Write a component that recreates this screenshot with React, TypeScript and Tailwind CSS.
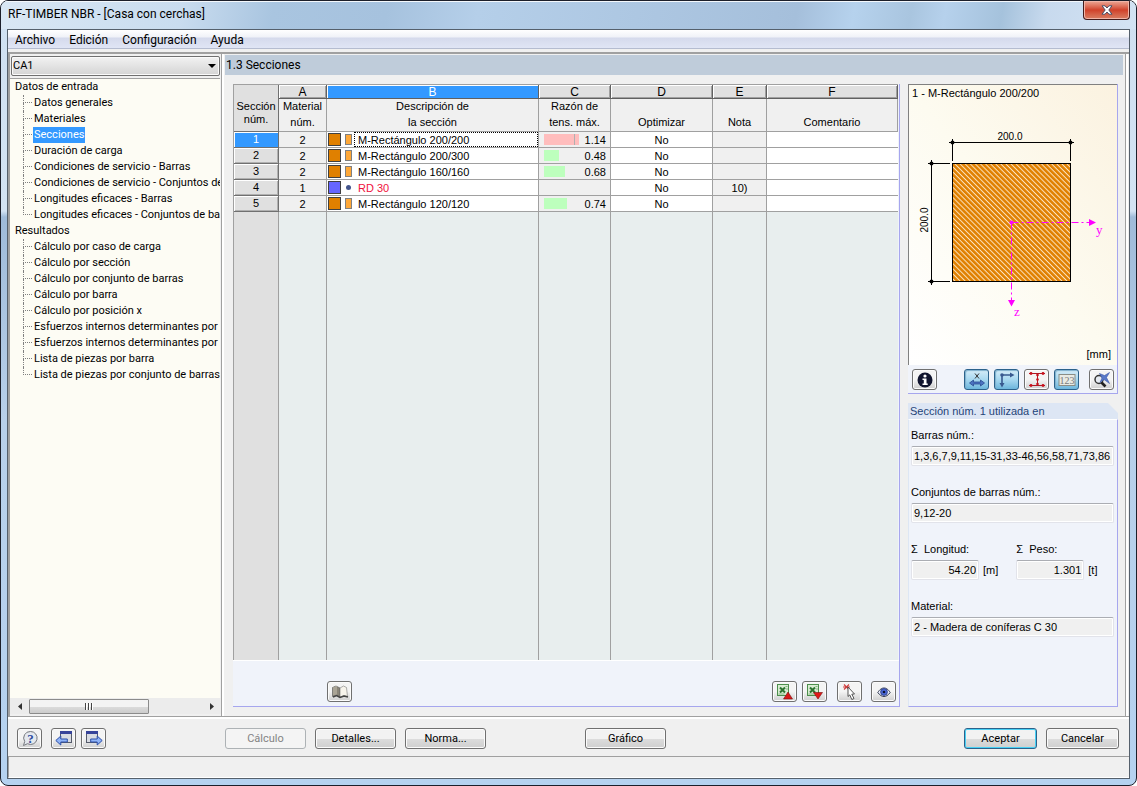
import React from "react";

const inputItems = [
  "Datos generales",
  "Materiales",
  "Secciones",
  "Duración de carga",
  "Condiciones de servicio - Barras",
  "Condiciones de servicio - Conjuntos de barras",
  "Longitudes eficaces - Barras",
  "Longitudes eficaces - Conjuntos de barras",
];

const resultItems = [
  "Cálculo por caso de carga",
  "Cálculo por sección",
  "Cálculo por conjunto de barras",
  "Cálculo por barra",
  "Cálculo por posición x",
  "Esfuerzos internos determinantes por barra",
  "Esfuerzos internos determinantes por conjunto de barras",
  "Lista de piezas por barra",
  "Lista de piezas por conjunto de barras",
];

type Row = {
  id: number;
  material: number;
  name: string;
  round?: boolean;
  ratio?: number;
  note?: string;
};

const rows: Row[] = [
  { id: 1, material: 2, name: "M-Rectángulo 200/200", ratio: 1.14 },
  { id: 2, material: 2, name: "M-Rectángulo 200/300", ratio: 0.48 },
  { id: 3, material: 2, name: "M-Rectángulo 160/160", ratio: 0.68 },
  { id: 4, material: 1, name: "RD 30", round: true, note: "10)" },
  { id: 5, material: 2, name: "M-Rectángulo 120/120", ratio: 0.74 },
];

// width in pixels of a bar whose ratio is 1
const BAR_UNIT = 31;

const TreeGroup = ({ title, items, selected }: { title: string; items: string[]; selected?: string }) => (
  <li>
    <div className="h-4 pl-[5px] leading-4">{title}</div>
    <ul className="pl-[13px]">
      {items.map((item, i) => (
        <li key={item} className="flex h-4">
          <span className="flex w-[10px] shrink-0 flex-col pr-px">
            <span className="h-2 border-b border-l border-dotted border-[#808080]"></span>
            {i < items.length - 1 && <span className="h-2 border-l border-dotted border-[#808080]"></span>}
          </span>
          <a
            href="#"
            className={
              item === selected
                ? "bg-[#3399ff] px-px leading-4 whitespace-nowrap text-white"
                : "px-px leading-4 whitespace-nowrap"
            }
          >
            {item}
          </a>
        </li>
      ))}
    </ul>
  </li>
);

const IconButton = ({ label, active, children }: { label: string; active?: boolean; children: React.ReactNode }) => (
  <button
    aria-label={label}
    className={
      active
        ? "flex h-[21px] w-[25px] shrink-0 items-center justify-center rounded-[3px] border border-[#2c628b] bg-linear-to-b from-[#d5ecf8] via-[#a8d8f0] to-[#6cb6dc] shadow-[inset_1px_1px_1px_#7fb0cc]"
        : "flex h-[21px] w-[25px] shrink-0 items-center justify-center rounded-[3px] border border-[#707070] bg-linear-to-b from-[#f4f4f4] from-50% to-[#cfcfcf] shadow-[inset_0_0_0_1px_#fbfbfb]"
    }
  >
    {children}
  </button>
);

const ColHead = ({ letter, active }: { letter: string; active?: boolean }) => (
  <th
    scope="col"
    className={
      active
        ? "h-[14px] border-r border-b border-[#606060] bg-[#3399ff] p-0 font-normal text-white shadow-[inset_1px_1px_0_#ffffff]"
        : "h-[14px] border-r border-b border-[#606060] bg-[#e0e0e0] p-0 font-normal shadow-[inset_1px_1px_0_#ffffff,inset_-1px_-1px_0_#a0a0a0]"
    }
  >
    <div className="h-[13px] text-[12px] leading-[14px]">{letter}</div>
  </th>
);

const Title = ({ top, bottom }: { top?: string; bottom: string }) => (
  <td className="h-[33px] border-r border-b border-[#a0a0a0] bg-[#f0f0f0] p-0 text-center align-bottom">
    <div className="h-4 leading-[14px]">{top}</div>
    <div className="h-4 leading-[14px]">{bottom}</div>
  </td>
);

const Field = ({ id, value, right }: { id: string; value: string; right?: boolean }) => (
  <input
    id={id}
    readOnly
    defaultValue={value}
    className={
      right
        ? "h-5 w-[68px] rounded-[2px] border border-[#e2e3ea] border-t-[#abadb3] bg-[#f0f0f0] px-[2px] text-right shadow-[inset_0_0_0_1px_#ffffff]"
        : "h-5 w-full rounded-[2px] border border-[#e2e3ea] border-t-[#abadb3] bg-[#f0f0f0] px-[2px] shadow-[inset_0_0_0_1px_#ffffff]"
    }
  />
);

const SectionDrawing = () => (
  <svg viewBox="0 0 209 240" className="h-[240px] w-[209px]" fill="none">
    <defs>
      <pattern id="hatch" width="3.6" height="3.6" patternUnits="userSpaceOnUse" patternTransform="rotate(45)">
        <rect width="4" height="4" fill="#e08000" />
        <rect width="4" height="1" fill="#fbe3c0" />
      </pattern>
    </defs>
    <rect x="43.5" y="61.5" width="118" height="118" fill="url(#hatch)" stroke="#000" />
    <g stroke="#000" shapeRendering="crispEdges">
      <path d="M40 40.500H165M43.500 37V59M161.500 37V59" />
      <path d="M22.500 58V183M19 61.500H41M19 179.500H41" />
    </g>
    <g fill="#000">
      <circle cx="43.500" cy="40.500" r="2" />
      <circle cx="161.500" cy="40.500" r="2" />
      <circle cx="22.500" cy="61.500" r="2" />
      <circle cx="22.500" cy="179.500" r="2" />
    </g>
    <g stroke="#ff00ff">
      <path d="M102.500 120.500H181" strokeDasharray="7 3 2 3" />
      <path d="M102.500 120.500V198" strokeDasharray="7 3 2 3" />
    </g>
    <path d="M180 117l7 3.500-7 3.500zM99 198h7l-3.500 6.500z" fill="#ff00ff" />
    <circle cx="102.500" cy="120.500" r="2" fill="#ff00ff" />
    <text x="101" y="38" textAnchor="middle" fontSize="10" fill="#000">200.0</text>
    <text x="19" y="118" textAnchor="middle" fontSize="10" fill="#000" transform="rotate(-90 19 118)">200.0</text>
    <g fontFamily="Liberation Serif, serif" fontSize="13" fill="#ff00ff">
      <text x="187" y="132">y</text>
      <text x="105" y="214">z</text>
    </g>
  </svg>
);

const ExcelIcon = ({ up }: { up?: boolean }) => (
  <svg viewBox="0 0 17 17" className="size-[17px]">
    <rect x="1.500" y="1.500" width="11" height="11" fill="#d8ecd2" stroke="#4c8f4c" />
    <path d="M4 4.500l5 5M9 4.500l-5 5" stroke="#2c7430" strokeWidth="2" />
    <path d="M9.500 3.500h2M10 6h2M2.500 11h6" stroke="#86b986" />
    {up ? (
      <path d="M12 9l4.500 7h-9z" fill="#d81818" stroke="#7b0d0d" strokeWidth=".6" />
    ) : (
      <path d="M7.500 9.500h9L12 16z" fill="#e01818" stroke="#7b0d0d" strokeWidth=".6" />
    )}
  </svg>
);

const WindowIcon = ({ back }: { back?: boolean }) => (
  <svg viewBox="0 0 18 17" className="h-[17px] w-[18px]">
    <rect x={back ? 5.5 : 1.5} y="1.500" width="11" height="11" fill="#d9dce3" stroke="#555b6b" />
    <rect x={back ? 5 : 1} y="1" width="12" height="3" fill="#37449a" />
    <path
      d={back ? "M.8 10.500l5-4.500v3h6.500v3H5.800v3z" : "M17.200 10.500l-5-4.500v3H5.700v3h6.500v3z"}
      fill="#8fb4f8"
      stroke="#2c4ea8"
    />
  </svg>
);

const textButton =
  "h-[21px] w-[81px] rounded-[3px] border border-[#707070] bg-linear-to-b from-[#f2f2f2] from-50% via-[#dddddd] via-50% to-[#cfcfcf] text-center leading-[19px] shadow-[inset_0_0_0_1px_#fbfbfb]";

const App = () => {
  return (
    <div className="flex h-screen flex-col overflow-hidden rounded-lg border border-[#1c1f2a] bg-[linear-gradient(to_bottom,#cfe0f1_0px,#d3e3f3_210px,#9fbbd9_216px,#b8d0ea_420px,#b5d2f0_100%)] font-[Roboto,sans-serif] text-[11px] text-black">
      <header className="flex h-7 shrink-0 items-start justify-between bg-[linear-gradient(100deg,#d9e7f4_0%,#c9dcef_16%,#a9c5e0_24%,#a6c2de_34%,#b5cfe9_42%,#a5bfdb_70%,#b6d2ed_75%,#a9c5df_80%,#b6d1ec_83%,#a5c2dc_88%,#c8daee_92%,#d3e3f3_100%)] shadow-[inset_0_1px_0_#f4f8fc]">
        <h1 className="pl-[7px] text-[12px] leading-[26px]">RF-TIMBER NBR - [Casa con cerchas]</h1>
        <button
          aria-label="Cerrar"
          className="mr-[6px] flex h-[19px] w-[47px] items-center justify-center rounded-b-[4px] border border-t-0 border-[#431c1c] bg-linear-to-b from-[#eba796] via-[#d0412a] via-50% to-[#d97d62] shadow-[inset_0_0_0_1px_#f0b5a8]"
        >
          <svg viewBox="0 0 12 10" className="h-[10px] w-3">
            <path d="M1 .8h3l2 2.200 2-2.200h3L7.800 5l3.200 4.200H8L6 7 4 9.200H1L4.200 5z" fill="#fff" stroke="#4b5066" strokeWidth="1" />
          </svg>
        </button>
      </header>

      <div className="mx-[6px] mb-[6px] flex min-h-0 flex-1 flex-col border border-[#55606c] bg-[#f0f0f0]">
        <nav className="flex h-[19px] shrink-0 gap-[14px] border-b border-[#b5bcd0] bg-[linear-gradient(to_bottom,#ffffff_0px,#f0f2f8_7px,#d5daec_8px,#e0e5f5_18px)] pl-[7px] text-[12px] leading-5">
          <a href="#">Archivo</a>
          <a href="#">Edición</a>
          <a href="#">Configuración</a>
          <a href="#">Ayuda</a>
        </nav>

        <div className="mt-[3px] flex min-h-0 flex-1 border-t-2 border-b border-[#a0a0a0]">
          <aside className="flex w-[214px] shrink-0 flex-col border-r border-l-2 border-[#a0a0a0] pt-[2px]">
            <div className="relative mx-px mb-[2px]">
              <select
                aria-label="Caso"
                className="h-5 w-full appearance-none rounded-[2px] border border-[#707070] bg-linear-to-b from-[#f2f2f2] to-[#d4d4d4] pl-px shadow-[inset_0_0_0_1px_#fafafa]"
              >
                <option>CA1</option>
              </select>
              <svg viewBox="0 0 8 4" className="pointer-events-none absolute top-2 right-1 h-1 w-2">
                <path d="M0 0h8L4 4z" fill="#000" />
              </svg>
            </div>
            <div className="mr-px min-h-0 flex-1 overflow-hidden border-t border-[#a0a0a0] bg-[#fdfcf4]">
              <ul>
                <TreeGroup title="Datos de entrada" items={inputItems} selected="Secciones" />
                <TreeGroup title="Resultados" items={resultItems} />
              </ul>
            </div>
            <div className="mb-[2px] flex h-4 shrink-0 items-center bg-[#ececec]">
              <button aria-label="Desplazar a la izquierda" className="flex w-[19px] justify-center">
                <svg viewBox="0 0 4 7" className="h-[7px] w-1">
                  <path d="M4 0v7L0 3.500z" fill="#333" />
                </svg>
              </button>
              <div className="flex h-[15px] w-[120px] items-center justify-center gap-px rounded-[1px] border border-[#8b8b8b] bg-linear-to-b from-[#f3f3f3] from-50% via-[#dcdcdc] via-50% to-[#cccccc]">
                <span className="h-[7px] w-[2px] border-l border-[#444444] bg-white"></span>
                <span className="h-[7px] w-[2px] border-l border-[#444444] bg-white"></span>
                <span className="h-[7px] w-[2px] border-l border-[#444444] bg-white"></span>
              </div>
              <button aria-label="Desplazar a la derecha" className="ml-auto flex w-[18px] justify-center">
                <svg viewBox="0 0 4 7" className="h-[7px] w-1">
                  <path d="M0 0v7l4-3.500z" fill="#333" />
                </svg>
              </button>
            </div>
          </aside>

          <main className="mr-[3px] ml-[2px] flex min-w-0 flex-1 flex-col border-r border-[#a0a0a0] pt-px shadow-[-2px_0_0_#ffffff,2px_0_0_#ffffff]">
            <h2 className="mr-[2px] ml-px h-5 shrink-0 bg-[#bfccda] pl-px text-[12px] leading-5">1.3 Secciones</h2>
            <div className="flex min-h-0 flex-1 gap-2 pt-[9px] pr-[7px] pb-[9px] pl-[9px] font-['Liberation_Sans',Arial,sans-serif]">
              <section className="flex min-w-0 flex-1 flex-col border-r border-b border-[#a6a6ee] bg-[#f0f3fa]">
                <div className="grid min-h-0 flex-1 pr-px">
                  <table className="h-full w-full table-fixed border-separate border-spacing-0 border-t border-l border-[#a0a0a0]">
                    <colgroup>
                      <col className="w-[45px]" />
                      <col className="w-12" />
                      <col className="w-[212px]" />
                      <col className="w-[72px]" />
                      <col className="w-[102px]" />
                      <col className="w-[54px]" />
                      <col />
                    </colgroup>
                    <thead>
                      <tr>
                        <th
                          scope="col"
                          rowSpan={2}
                          className="border-r border-b border-[#707070] bg-[#e0e0e0] p-0 pb-[5px] text-center align-bottom leading-[13px] font-normal"
                        >
                          Sección
                          <br />
                          núm.
                        </th>
                        <ColHead letter="A" />
                        <ColHead letter="B" active />
                        <ColHead letter="C" />
                        <ColHead letter="D" />
                        <ColHead letter="E" />
                        <ColHead letter="F" />
                      </tr>
                      <tr>
                        <Title top="Material" bottom="núm." />
                        <Title top="Descripción de" bottom="la sección" />
                        <Title top="Razón de" bottom="tens. máx." />
                        <Title bottom="Optimizar" />
                        <Title bottom="Nota" />
                        <Title bottom="Comentario" />
                      </tr>
                    </thead>
                    <tbody>
                      {rows.map((row) => (
                        <tr key={row.id} className="text-center">
                          <th
                            scope="row"
                            className={
                              row.id === 1
                                ? "h-4 border-r border-b border-[#707070] bg-[#3399ff] p-0 font-normal text-white shadow-[inset_1px_1px_0_#ffffff]"
                                : "h-4 border-r border-b border-[#707070] bg-[#e0e0e0] p-0 font-normal shadow-[inset_1px_1px_0_#ffffff,inset_-1px_-1px_0_#b0b0b0]"
                            }
                          >
                            <div className="h-[15px] leading-[14px]">{row.id}</div>
                          </th>
                          <td className="border-r border-b border-[#a0a0a0] bg-[#f0f0f0] p-0">
                            <div className="h-[15px] leading-4">{row.material}</div>
                          </td>
                          <td className="border-r border-b border-[#a0a0a0] bg-white p-0">
                            <div className="flex h-[15px] items-center pl-px text-left">
                              <span
                                className={
                                  row.round
                                    ? "mr-1 size-[13px] border border-[#404040] bg-[#6666ff]"
                                    : "mr-1 size-[13px] border border-[#404040] bg-[#e08000]"
                                }
                              ></span>
                              <span className="mr-[2px] flex w-[7px] justify-center">
                                {row.round ? (
                                  <span className="size-[5px] rounded-full bg-[#44558c]"></span>
                                ) : (
                                  <span className="h-[11px] w-[7px] border border-[#808080] bg-[#ffa838]"></span>
                                )}
                              </span>
                              <span
                                className={
                                  row.id === 1
                                    ? "h-[15px] flex-1 border border-dotted border-black pl-[3px] leading-[14px]"
                                    : row.round
                                      ? "h-[15px] flex-1 pl-1 leading-4 text-[#f0103c]"
                                      : "h-[15px] flex-1 pl-1 leading-4"
                                }
                              >
                                {row.name}
                              </span>
                            </div>
                          </td>
                          <td className="border-r border-b border-[#a0a0a0] bg-[#f0f0f0] p-0">
                            {row.ratio && (
                              <div className="flex h-[15px] justify-between pr-1 pl-[5px] leading-4">
                                <span
                                  className={row.ratio > 1 ? "mt-[2px] flex h-[11px] bg-[#ffbdbd]" : "mt-[2px] h-[11px] bg-[#bdffbd]"}
                                  style={{ width: Math.round(row.ratio * BAR_UNIT) }}
                                >
                                  {row.ratio > 1 && <span className="ml-[30px] w-px bg-[#b0b0b0]"></span>}
                                </span>
                                {row.ratio.toFixed(2)}
                              </div>
                            )}
                          </td>
                          <td className="border-r border-b border-[#a0a0a0] bg-white p-0">
                            <div className="h-[15px] leading-4">No</div>
                          </td>
                          <td className="border-r border-b border-[#a0a0a0] bg-[#f0f0f0] p-0">
                            <div className="h-[15px] leading-4">{row.note}</div>
                          </td>
                          <td className="border-b border-[#a0a0a0] bg-white p-0"></td>
                        </tr>
                      ))}
                      <tr className="h-full">
                        <td className="border-r border-[#a0a0a0] bg-[#e0e0e0] p-0"></td>
                        <td className="border-r border-[#a0a0a0] bg-[#e8eeee] p-0"></td>
                        <td className="border-r border-[#a0a0a0] bg-[#e8eeee] p-0"></td>
                        <td className="border-r border-[#a0a0a0] bg-[#e8eeee] p-0"></td>
                        <td className="border-r border-[#a0a0a0] bg-[#e8eeee] p-0"></td>
                        <td className="border-r border-[#a0a0a0] bg-[#e8eeee] p-0"></td>
                        <td className="bg-[#e8eeee] p-0"></td>
                      </tr>
                    </tbody>
                  </table>
                </div>
                <div className="flex h-[46px] shrink-0 items-start border-t border-white pt-5 pr-[3px] pl-[94px]">
                  <IconButton label="Biblioteca">
                    <svg viewBox="0 0 18 14" className="h-[14px] w-[18px]">
                      <path d="M1.500 2.500L5 1l4 2v9L5 10l-3.500 1.500z" fill="#8a8578" stroke="#555" strokeWidth=".6" />
                      <path d="M9 3l3.500-2 3 1.500 1 9-3.500-1L9 12z" fill="#f7f4ec" stroke="#777" strokeWidth=".6" />
                      <path d="M5 1v9M3 2v8.500" stroke="#c9c3b3" />
                      <path d="M2 12l3.500-1.500L9 12.500l4-1.500 4 1" stroke="#444" strokeWidth="1.500" fill="none" />
                    </svg>
                  </IconButton>
                  <div className="ml-auto flex gap-[5px]">
                    <IconButton label="Exportar a Excel">
                      <ExcelIcon up />
                    </IconButton>
                    <IconButton label="Importar de Excel">
                      <ExcelIcon />
                    </IconButton>
                    <div className="ml-[5px] flex gap-[9px]">
                      <IconButton label="Seleccionar">
                        <svg viewBox="0 0 16 18" className="h-[18px] w-4">
                          <path d="M2 1.500l5 5M7 1.500l-5 5M1 4h7" stroke="#d04040" strokeWidth="1.200" />
                          <path d="M6 4l6.500 7-2.700.2 2.200 4.300-2.200 1-2-4.600L6 13.500z" fill="#fff" stroke="#444" strokeWidth=".9" />
                        </svg>
                      </IconButton>
                      <IconButton label="Ver">
                        <svg viewBox="0 0 14 12" className="h-3 w-[14px]">
                          <path d="M.8 6.500C3 3 5 2 7 2s4 1 6.200 4.500C11 9.500 9 10.500 7 10.500S3 9.500.8 6.500z" fill="#e8ecf8" stroke="#333a50" />
                          <circle cx="7" cy="6" r="3.400" fill="#4a69d8" stroke="#24357e" strokeWidth=".8" />
                          <circle cx="7" cy="6" r="1.300" fill="#0a1030" />
                        </svg>
                      </IconButton>
                    </div>
                  </div>
                </div>
              </section>

              <div className="flex w-[210px] shrink-0 flex-col gap-[9px]">
                <section className="border-r border-b border-[#a6a6ee] bg-[#f0f3fa]">
                  <div className="flex flex-col overflow-hidden border-t border-l border-[#808080] bg-linear-to-bl from-[#fbf2e0] via-[#fdfbf0] via-50% to-white">
                    <h3 className="h-[17px] pl-[3px] leading-[17px]">1 - M-Rectángulo 200/200</h3>
                    <SectionDrawing />
                    <span className="h-[23px] pr-[6px] text-right leading-6">[mm]</span>
                  </div>
                  <div className="flex items-start pt-1 pr-[3px] pb-[3px] pl-[4px]">
                    <IconButton label="Información">
                      <svg viewBox="0 0 16 16" className="size-4">
                        <circle cx="8" cy="8" r="7.500" fill="#10142e" />
                        <circle cx="8" cy="4" r="1.600" fill="#fff" />
                        <path d="M5.500 6.500h4v5h1.200V13H5.500v-1.500h1.300V8H5.500z" fill="#fff" />
                      </svg>
                    </IconButton>
                    <div className="ml-auto flex gap-[5px]">
                      <IconButton label="Vista x" active>
                        <svg viewBox="0 0 18 16" className="h-4 w-[18px]" fill="none">
                          <path d="M7 1.500l4 5M11 1.500l-4 5" stroke="#333" />
                          <path d="M1.500 11l4-3v2h7V8l4 3-4 3v-2h-7v2z" fill="#4b72c0" stroke="#2b4d92" strokeWidth=".8" />
                        </svg>
                      </IconButton>
                      <IconButton label="Ejes" active>
                        <svg viewBox="0 0 18 16" className="h-4 w-[18px]" fill="none">
                          <path d="M3.500 3h10M4 3v9" stroke="#39598f" strokeWidth="1.600" />
                          <path d="M12 .5L16.500 3 12 5.500zM1.500 11L4 15.500 6.500 11z" fill="#39598f" />
                          <circle cx="4" cy="3" r="1.800" fill="#39598f" />
                        </svg>
                      </IconButton>
                      <IconButton label="Cotas">
                        <svg viewBox="0 0 18 17" className="h-[17px] w-[18px]" fill="none">
                          <path d="M1 2.500h16M1 14.500h16M9.500 3v11" stroke="#b01824" shapeRendering="crispEdges" />
                          <g fill="#c8101c">
                            <circle cx="3" cy="2.500" r="1.400" />
                            <circle cx="15" cy="2.500" r="1.400" />
                            <circle cx="3" cy="14.500" r="1.400" />
                            <circle cx="15" cy="14.500" r="1.400" />
                            <circle cx="9.500" cy="4" r="1.300" />
                            <circle cx="9.500" cy="8.500" r="1.300" />
                            <circle cx="9.500" cy="13" r="1.300" />
                          </g>
                        </svg>
                      </IconButton>
                      <IconButton label="Valores" active>
                        <svg viewBox="0 0 18 12" className="h-3 w-[18px]">
                          <rect x="1" y=".5" width="16" height="11" fill="#e8eae4" stroke="#8a8d86" />
                          <text x="9" y="9.500" textAnchor="middle" fontSize="10" fontFamily="Liberation Serif, serif" fill="#77797a">
                            123
                          </text>
                        </svg>
                      </IconButton>
                      <div className="ml-[5px]">
                        <IconButton label="Restablecer vista">
                          <svg viewBox="0 0 18 17" className="h-[17px] w-[18px]" fill="none">
                            <circle cx="6" cy="8.500" r="4" fill="#e6ebf2" stroke="#333" strokeWidth="1.500" />
                            <path d="M8.500 11.500l4 4" stroke="#222" strokeWidth="2.600" />
                            <path d="M6.500 2.500l5 2L16.500 1.500l-3 5 3 6-5.500-4-4 3 2-4.500z" fill="#5878c8" stroke="#3a58a8" strokeWidth=".6" />
                          </svg>
                        </IconButton>
                      </div>
                    </div>
                  </div>
                </section>

                <section className="flex min-h-0 flex-1 flex-col">
                  <h3 className="h-4 shrink-0 bg-[#dde6f4] pl-[2px] leading-[17px] text-[#1f4478] [clip-path:polygon(0_0,calc(100%-10px)_0,100%_10px,100%_100%,0_100%)]">
                    Sección núm. 1 utilizada en
                  </h3>
                  <div className="flex flex-1 flex-col gap-[18px] border border-t-white border-r-[#a6a6ee] border-b-[#a6a6ee] border-l-[#dde6f4] bg-[#f0f3fa] pt-[7px] pr-[3px] pl-[2px]">
                    <div className="flex flex-col gap-[3px]">
                      <label htmlFor="members" className="h-4 leading-4">Barras núm.:</label>
                      <Field id="members" value="1,3,6,7,9,11,15-31,33-46,56,58,71,73,86,88" />
                    </div>
                    <div className="flex flex-col gap-[3px]">
                      <label htmlFor="sets" className="h-4 leading-4">Conjuntos de barras núm.:</label>
                      <Field id="sets" value="9,12-20" />
                    </div>
                    <div className="flex gap-[18px]">
                      <div className="flex flex-col gap-[3px]">
                        <label htmlFor="length" className="h-4 leading-4">Σ&nbsp; Longitud:</label>
                        <div className="flex gap-1 leading-5">
                          <Field id="length" value="54.20" right />
                          <span>[m]</span>
                        </div>
                      </div>
                      <div className="flex flex-col gap-[3px]">
                        <label htmlFor="weight" className="h-4 leading-4">Σ&nbsp; Peso:</label>
                        <div className="flex gap-1 leading-5">
                          <Field id="weight" value="1.301" right />
                          <span>[t]</span>
                        </div>
                      </div>
                    </div>
                    <div className="flex flex-col gap-[3px]">
                      <label htmlFor="material" className="h-4 leading-4">Material:</label>
                      <Field id="material" value="2 - Madera de coníferas C 30" />
                    </div>
                  </div>
                </section>
              </div>
            </div>
          </main>
        </div>

        <footer className="flex h-10 shrink-0 items-start border-t-2 border-b border-t-white border-b-[#a0a0a0] pt-[9px] pr-[10px] pl-[9px]">
          <IconButton label="Ayuda">
            <svg viewBox="0 0 18 17" className="h-[17px] w-[18px]">
              <path d="M9.500 1.500a6.500 6.500 0 1 1-3 12.200L2.500 15.500l1.200-4A6.500 6.500 0 0 1 9.500 1.500z" fill="#e4e8ee" stroke="#76797f" />
              <text x="9.500" y="12.500" textAnchor="middle" fontSize="13" fontWeight="bold" fontFamily="Liberation Serif, serif" fill="#2d4a9e">
                ?
              </text>
            </svg>
          </IconButton>
          <div className="ml-[9px] flex gap-[5px]">
            <IconButton label="Anterior">
              <WindowIcon back />
            </IconButton>
            <IconButton label="Siguiente">
              <WindowIcon />
            </IconButton>
          </div>
          <div className="ml-[119px] flex gap-[9px]">
            <button disabled className="h-[21px] w-[81px] rounded-[3px] border border-[#adb2b5] bg-[#f4f4f4] leading-[19px] text-[#838383]">
              Cálculo
            </button>
            <button className={textButton}>Detalles...</button>
            <button className={textButton}>Norma...</button>
          </div>
          <div className="ml-[99px]">
            <button className={textButton}>Gráfico</button>
          </div>
          <div className="ml-auto flex gap-[9px]">
            <button className="h-[21px] w-[73px] rounded-[3px] border border-[#2c628b] bg-linear-to-b from-[#f2f2f2] from-50% via-[#dddddd] via-50% to-[#cfcfcf] leading-[19px] shadow-[inset_0_0_0_1px_#48d0f4]">
              Aceptar
            </button>
            <button className="h-[21px] w-[73px] rounded-[3px] border border-[#707070] bg-linear-to-b from-[#f2f2f2] from-50% via-[#dddddd] via-50% to-[#cfcfcf] leading-[19px] shadow-[inset_0_0_0_1px_#fbfbfb]">
              Cancelar
            </button>
          </div>
        </footer>
        <div className="h-[21px] shrink-0 border-b border-l border-b-white border-l-[#a0a0a0]"></div>
      </div>
    </div>
  );
};

export default App;
